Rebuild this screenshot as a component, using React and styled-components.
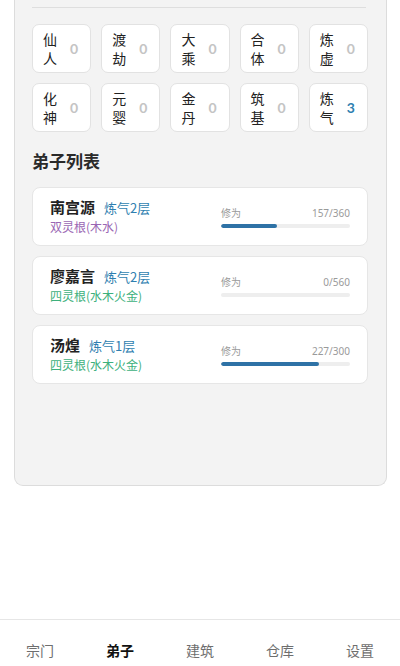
import React from "react";
import styled, { createGlobalStyle } from "styled-components";

const GlobalStyle = createGlobalStyle`
  html, body {
    margin: 0;
    padding: 0;
    background: #fff;
    font-family: "Noto Sans", "Noto Sans CJK SC", sans-serif;
  }
`;

const Page = styled.div`
  height: 666px;
  display: flex;
  flex-direction: column;
  overflow: hidden;
`;

const Main = styled.main`
  flex: 1;
  padding: 0 13px 0 14px;
`;

const Panel = styled.section`
  height: 486px;
  box-sizing: border-box;
  background: #f3f3f3;
  border: 1px solid #dcdcdc;
  border-top: none;
  border-radius: 0 0 9px 9px;
  padding: 7px 18px 0 17px;
`;

const Divider = styled.div`
  height: 1px;
  background: #dedede;
  margin-right: 2px;
`;

const RealmGrid = styled.div`
  display: grid;
  grid-template-columns: repeat(5, 1fr);
  gap: 10px 10px;
  margin-top: 16px;
`;

const RealmCell = styled.div`
  height: 49px;
  box-sizing: border-box;
  background: #fff;
  border: 1px solid #e2e2e2;
  border-radius: 7px;
  display: flex;
  align-items: center;
  padding: 0 0 0 10px;
  gap: 13px;
`;

const RealmName = styled.span`
  width: 14px;
  font-size: 14px;
  line-height: 19px;
  color: #222;
  font-family: "Noto Sans CJK SC", sans-serif;
`;

const RealmCount = styled.span`
  font-family: Lato, "Noto Sans", sans-serif;
  font-size: 14px;
  font-weight: 700;
  color: ${(p) => (p.$active ? "#2f7fb0" : "#c4c4c4")};
`;

const Title = styled.h2`
  margin: 17px 0 14px;
  font-size: 17px;
  line-height: 24px;
  font-weight: 700;
  color: #2a2a2a;
  font-family: "Noto Sans CJK SC", sans-serif;
`;

const List = styled.div`
  display: flex;
  flex-direction: column;
  gap: 10px;
`;

const Card = styled.div`
  height: 59px;
  box-sizing: border-box;
  background: #fff;
  border: 1px solid #e6e6e6;
  border-radius: 8px;
  display: flex;
  align-items: center;
  padding: 0 17px 0 17px;
`;

const Info = styled.div`
  flex: 1;
  display: flex;
  flex-direction: column;
  gap: 1px;
`;

const NameRow = styled.div`
  display: flex;
  align-items: baseline;
  gap: 9px;
`;

const Name = styled.span`
  font-size: 15px;
  line-height: 20px;
  font-weight: 700;
  color: #222;
  font-family: "Noto Sans CJK SC", sans-serif;
`;

const Realm = styled.span`
  font-size: 13px;
  color: #2f7fb0;
  font-family: "Noto Sans CJK SC", sans-serif;
`;

const Root = styled.span`
  font-size: 12px;
  line-height: 18px;
  color: ${(p) => p.$color};
  font-family: "Noto Sans CJK SC", sans-serif;
`;

const Progress = styled.div`
  width: 129px;
  display: flex;
  flex-direction: column;
  gap: 4px;
`;

const ProgressHead = styled.div`
  display: flex;
  justify-content: space-between;
  font-size: 10px;
  line-height: 14px;
  color: #9a9a9a;
`;

const Track = styled.div`
  height: 4px;
  border-radius: 2px;
  background: #eeeeee;
  overflow: hidden;
`;

const Fill = styled.div`
  height: 100%;
  border-radius: 2px;
  background: #2e72a6;
`;

const Nav = styled.nav`
  height: 47px;
  box-sizing: border-box;
  border-top: 1px solid #e6e6e6;
  display: grid;
  grid-template-columns: repeat(5, 1fr);
  padding-top: 20px;
`;

const NavItem = styled.span`
  text-align: center;
  font-size: 14px;
  line-height: 20px;
  font-family: "Noto Sans CJK SC", sans-serif;
  color: ${(p) => (p.$active ? "#111" : "#6e6e6e")};
  font-weight: ${(p) => (p.$active ? 700 : 400)};
`;

const realms = [
  ["仙人", 0], ["渡劫", 0], ["大乘", 0], ["合体", 0], ["炼虚", 0],
  ["化神", 0], ["元婴", 0], ["金丹", 0], ["筑基", 0], ["炼气", 3],
];

const disciples = [
  { name: "南宫源", realm: "炼气2层", root: "双灵根(木水)", color: "#9a66b3", cur: 157, max: 360 },
  { name: "廖嘉言", realm: "炼气2层", root: "四灵根(水木火金)", color: "#3db07c", cur: 0, max: 560 },
  { name: "汤煌", realm: "炼气1层", root: "四灵根(水木火金)", color: "#3db07c", cur: 227, max: 300 },
];

const tabs = ["宗门", "弟子", "建筑", "仓库", "设置"];

export default function App() {
  return (
    <Page>
      <GlobalStyle />
      <Main>
        <Panel>
          <Divider />
          <RealmGrid>
            {realms.map(([label, count]) => (
              <RealmCell key={label}>
                <RealmName>{label}</RealmName>
                <RealmCount $active={count > 0}>{count}</RealmCount>
              </RealmCell>
            ))}
          </RealmGrid>
          <Title>弟子列表</Title>
          <List>
            {disciples.map((d) => (
              <Card key={d.name}>
                <Info>
                  <NameRow>
                    <Name>{d.name}</Name>
                    <Realm>{d.realm}</Realm>
                  </NameRow>
                  <Root $color={d.color}>{d.root}</Root>
                </Info>
                <Progress>
                  <ProgressHead>
                    <span>修为</span>
                    <span>{d.cur}/{d.max}</span>
                  </ProgressHead>
                  <Track>
                    <Fill style={{ width: `${(d.cur / d.max) * 100}%` }} />
                  </Track>
                </Progress>
              </Card>
            ))}
          </List>
        </Panel>
      </Main>
      <Nav>
        {tabs.map((t) => (
          <NavItem key={t} $active={t === "弟子"}>{t}</NavItem>
        ))}
      </Nav>
    </Page>
  );
}
